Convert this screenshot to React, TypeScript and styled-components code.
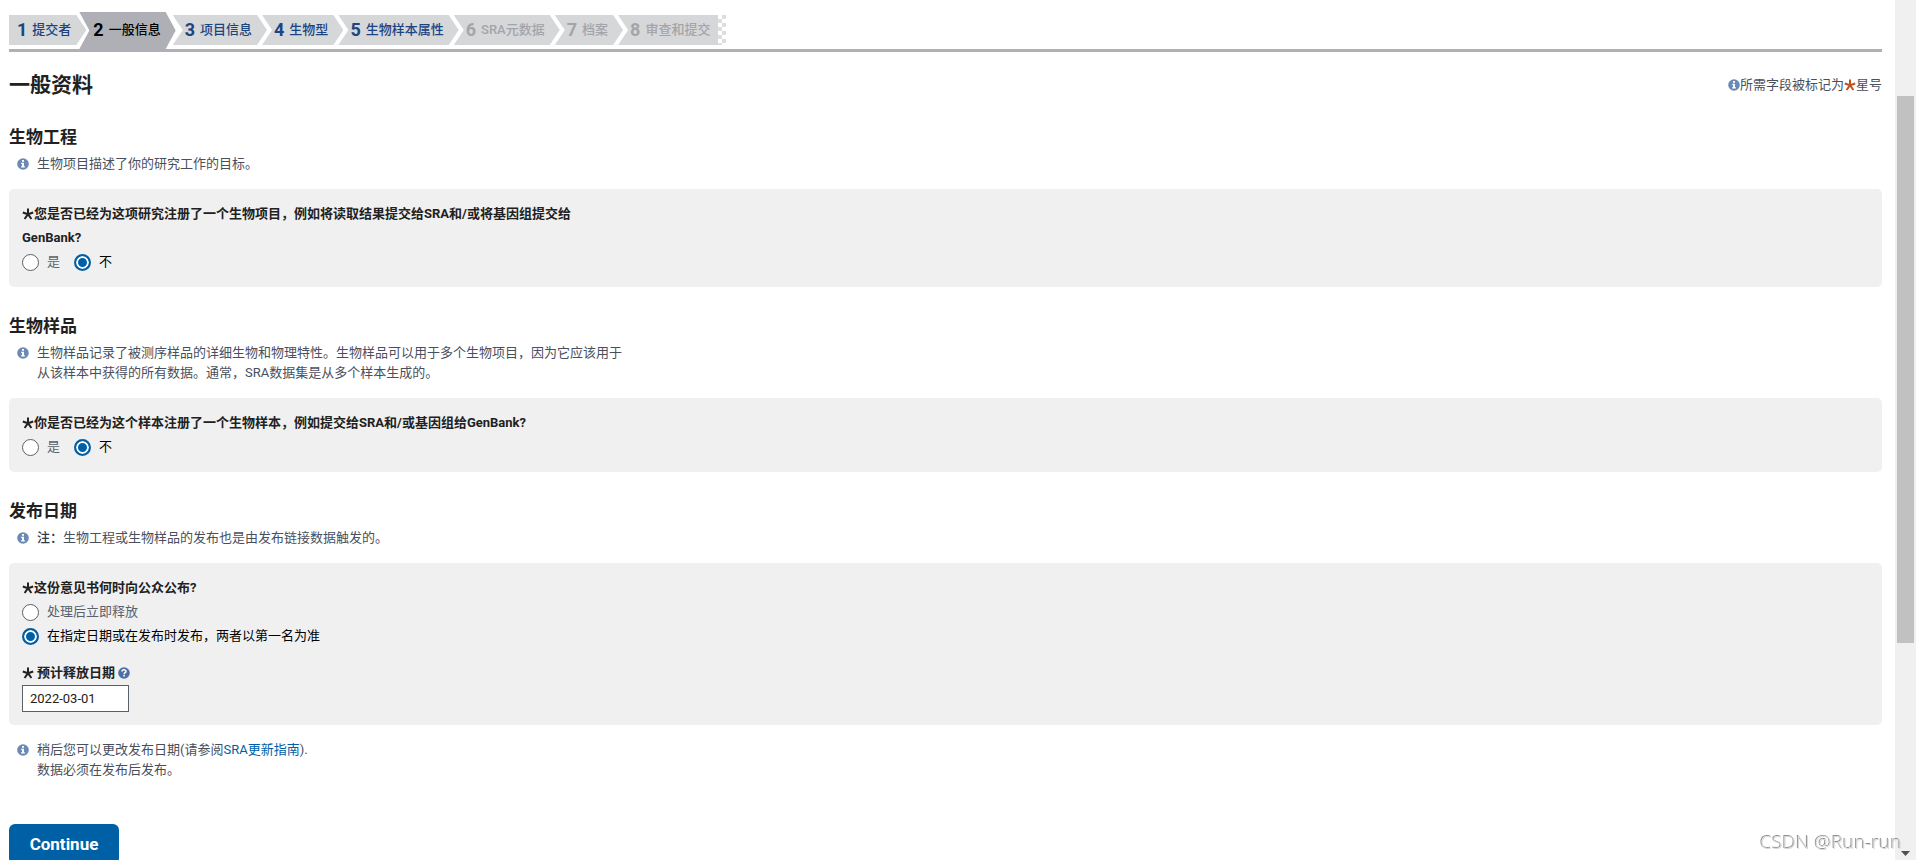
import React from "react";
import styled, { createGlobalStyle, css } from "styled-components";

const GlobalStyle = createGlobalStyle`
  *, *::before, *::after { box-sizing: border-box; }
  body {
    margin: 0;
    background: #fff;
    color: #212121;
    font: 13px/20px Roboto, "Noto Sans CJK SC", sans-serif;
  }
`;

const Shell = styled.div`
  display: flex;
  height: 100vh;
  overflow: hidden;
`;

const Main = styled.main`
  flex: 1;
  min-width: 0;
  padding: 12px 13px 0 9px;
`;

const Steps = styled.ol`
  display: flex;
  margin: 0;
  padding: 0;
  list-style: none;
  height: 40px;
  border-bottom: 3px solid #aeb0b5;
`;

type StepState = "open" | "active" | "disabled";

const StepItem = styled.li<{ $state: StepState }>`
  height: 30px;
  margin: 3px 0 0 -5px;

  &:first-child {
    margin-left: 0;
  }

  ${({ $state }) =>
    $state === "active" &&
    css`
      height: 37px;
      margin: 0 2px 0 -7px;
    `}
`;

const stepColors: Record<StepState, string> = {
  open: "#1c4481",
  active: "#000",
  disabled: "#a3a5aa",
};

const StepLink = styled.a<{ $state: StepState; $edge?: "first" | "last" }>`
  display: flex;
  align-items: center;
  gap: 5px;
  height: 100%;
  padding: 0 15px 0 12px;
  background: ${({ $state }) => ($state === "active" ? "#aeb0b5" : "#d6d7d9")};
  color: ${({ $state }) => stepColors[$state]};
  font-weight: 500;
  text-decoration: none;
  white-space: nowrap;
  clip-path: polygon(0 0, calc(100% - 10px) 0, 100% 50%, calc(100% - 10px) 100%, 0 100%, 10px 50%);

  ${({ $state }) =>
    $state === "active" &&
    css`
      padding-left: 14px;
      padding-bottom: 2px;
    `}
  ${({ $edge }) =>
    $edge === "first" &&
    css`
      padding-left: 8px;
      clip-path: polygon(0 0, calc(100% - 10px) 0, 100% 50%, calc(100% - 10px) 100%, 0 100%);
    `}
  ${({ $edge }) =>
    $edge === "last" &&
    css`
      padding-right: 8px;
      clip-path: polygon(0 0, 100% 0, 100% 100%, 0 100%, 10px 50%);
    `}
`;

const StepNumber = styled.span`
  font-size: 18px;
  font-weight: 700;
`;

const StepsTail = styled.li`
  width: 8px;
  height: 30px;
  margin-top: 3px;
  background: conic-gradient(#dddee0 25%, #fff 0 50%, #dddee0 0 75%, #fff 0) 0 0 / 8px 8px;
`;

const TitleRow = styled.header`
  display: flex;
  justify-content: space-between;
  align-items: center;
  margin-top: 18px;
`;

const Title = styled.h1`
  margin: 0;
  font-size: 21px;
  line-height: 30px;
  font-weight: 700;
`;

const RequiredHint = styled.p`
  display: flex;
  align-items: center;
  margin: 0;
  color: #494f5c;
`;

const Section = styled.section`
  margin-top: 27px;

  ${TitleRow} + & {
    margin-top: 25px;
  }
`;

const SectionTitle = styled.h2`
  margin: 0 0 5px;
  font-size: 17px;
  line-height: 24px;
  font-weight: 700;
`;

const Note = styled.div`
  display: flex;
  gap: 8px;
  max-width: 620px;
  padding-left: 8px;
  color: #494f5c;

  p {
    margin: 0;
  }

  strong {
    font-weight: 500;
    color: #323a45;
  }
`;

const IconBox = styled.span`
  display: flex;
  align-items: center;
  flex: none;
  height: 20px;
`;

const Panel = styled.div`
  margin: 15px 0;
  padding: 13px;
  border-radius: 5px;
  background: #f0f0f0;
  line-height: 24px;
`;

const Group = styled.fieldset`
  margin: 0;
  padding: 0;
  border: 0;
`;

const Question = styled.legend`
  max-width: 590px;
  padding: 0;
  font-weight: 700;
`;

const Options = styled.div<{ $stacked?: boolean }>`
  display: flex;
  flex-direction: ${({ $stacked }) => ($stacked ? "column" : "row")};
  align-items: flex-start;
  column-gap: 14px;
`;

const OptionLabel = styled.label`
  display: flex;
  align-items: center;
  gap: 8px;
  height: 24px;
  color: #5b616b;

  &:has(input:checked) {
    color: #000;
  }
`;

const Radio = styled.input.attrs({ type: "radio" })`
  appearance: none;
  width: 17px;
  height: 17px;
  margin: 0;
  border: 1px solid #5b616b;
  border-radius: 50%;
  background: #fff;

  &:checked {
    border: 2px solid #0060a5;
    background: #0060a5;
    box-shadow: inset 0 0 0 2px #fff;
  }
`;

const DateField = styled.div`
  margin-top: 13px;
`;

const DateLabel = styled.label`
  display: flex;
  align-items: center;
  gap: 3px;
  font-weight: 700;
`;

const DateInput = styled.input`
  display: block;
  width: 107px;
  height: 27px;
  padding: 0 7px;
  border: 1px solid #5b616b;
  border-radius: 0;
  background: #fff;
  color: #212121;
  font: inherit;
`;

const Link = styled.a`
  color: #0060a5;
  text-decoration: none;
`;

const Continue = styled.button`
  display: block;
  width: 110px;
  height: 40px;
  margin-top: 44px;
  border: 0;
  border-radius: 6px;
  background: #0060a5;
  color: #fff;
  font: 700 17px/20px Roboto, sans-serif;
`;

const ScrollTrack = styled.div`
  display: flex;
  flex-direction: column;
  align-items: center;
  justify-content: space-between;
  width: 21px;
  padding: 96px 2px 4px;
  background: #f0f0f0;
`;

const ScrollThumb = styled.div`
  width: 17px;
  height: 72%;
  background: #c1c1c1;
`;

const Watermark = styled.div`
  position: fixed;
  right: 14px;
  bottom: 4px;
  color: #d8d8d8;
  font: 300 19px/28px "Noto Sans", sans-serif;
  text-shadow: -1px -1px 0 #8f8f8f;
`;

const StarSvg = styled.svg<{ $accent?: boolean }>`
  display: inline-block;
  vertical-align: -2px;
  color: ${({ $accent }) => ($accent ? "#c05020" : "#212121")};
`;

const Star = ({ accent }: { accent?: boolean }) => (
  <StarSvg $accent={accent} width="12" height="12" viewBox="0 0 12 12" aria-hidden="true">
    <path
      d="M6 6.2V0.500M6 6.2L0.800 4.500M6 6.2L11.200 4.500M6 6.2L2.600 11M6 6.2L9.400 11"
      fill="none"
      stroke="currentColor"
      strokeWidth="2"
    />
  </StarSvg>
);

const InfoIcon = () => (
  <svg width="12" height="12" viewBox="0 0 12 12" aria-hidden="true">
    <circle cx="6" cy="6" r="5.8" fill="#6a8ab5" />
    <path d="M5 2h2v1.7H5zM4.2 4.7H7v3.5h.9v1.3H4.1V8.2H5V6h-.8z" fill="#fff" />
  </svg>
);

const HelpIcon = () => (
  <svg width="12" height="12" viewBox="0 0 12 12" aria-hidden="true">
    <circle cx="6" cy="6" r="5.8" fill="#4e6fa3" />
    <path d="M4 4.6C4 2.3 8 2.3 8 4.5C8 5.8 6.1 5.7 6.1 7.2" fill="none" stroke="#fff" strokeWidth="1.5" />
    <path d="M5.3 8h1.6v1.5H5.3z" fill="#fff" />
  </svg>
);

const steps: { label: string; state: StepState }[] = [
  { label: "提交者", state: "open" },
  { label: "一般信息", state: "active" },
  { label: "项目信息", state: "open" },
  { label: "生物型", state: "open" },
  { label: "生物样本属性", state: "open" },
  { label: "SRA元数据", state: "disabled" },
  { label: "档案", state: "disabled" },
  { label: "审查和提交", state: "disabled" },
];

interface InfoNoteProps {
  children: React.ReactNode;
}

const InfoNote = ({ children }: InfoNoteProps) => (
  <Note>
    <IconBox>
      <InfoIcon />
    </IconBox>
    <p>{children}</p>
  </Note>
);

interface ChoiceProps {
  name: string;
  question: string;
  options: string[];
  stacked?: boolean;
}

const Choice = ({ name, question, options, stacked }: ChoiceProps) => (
  <Group>
    <Question>
      <Star />
      {question}
    </Question>
    <Options $stacked={stacked}>
      {options.map((option, i) => (
        <OptionLabel key={option}>
          <Radio name={name} defaultChecked={i === 1} />
          {option}
        </OptionLabel>
      ))}
    </Options>
  </Group>
);

export default function App() {
  return (
    <>
      <GlobalStyle />
      <Shell>
        <Main>
          <nav>
            <Steps>
              {steps.map(({ label, state }, i) => (
                <StepItem key={label} $state={state}>
                  <StepLink
                    href="#"
                    $state={state}
                    $edge={i === 0 ? "first" : i === steps.length - 1 ? "last" : undefined}
                  >
                    <StepNumber>{i + 1}</StepNumber>
                    {label}
                  </StepLink>
                </StepItem>
              ))}
              <StepsTail aria-hidden="true" />
            </Steps>
          </nav>

          <TitleRow>
            <Title>一般资料</Title>
            <RequiredHint>
              <InfoIcon />
              所需字段被标记为
              <Star accent />
              星号
            </RequiredHint>
          </TitleRow>

          <Section>
            <SectionTitle>生物工程</SectionTitle>
            <InfoNote>生物项目描述了你的研究工作的目标。</InfoNote>
            <Panel>
              <Choice
                name="bioproject"
                question="您是否已经为这项研究注册了一个生物项目，例如将读取结果提交给SRA和/或将基因组提交给GenBank?"
                options={["是", "不"]}
              />
            </Panel>
          </Section>

          <Section>
            <SectionTitle>生物样品</SectionTitle>
            <InfoNote>
              生物样品记录了被测序样品的详细生物和物理特性。生物样品可以用于多个生物项目，因为它应该用于从该样本中获得的所有数据。通常，SRA数据集是从多个样本生成的。
            </InfoNote>
            <Panel>
              <Choice
                name="biosample"
                question="你是否已经为这个样本注册了一个生物样本，例如提交给SRA和/或基因组给GenBank?"
                options={["是", "不"]}
              />
            </Panel>
          </Section>

          <Section>
            <SectionTitle>发布日期</SectionTitle>
            <InfoNote>
              <strong>注：</strong>生物工程或生物样品的发布也是由发布链接数据触发的。
            </InfoNote>
            <Panel>
              <Choice
                name="release"
                question="这份意见书何时向公众公布?"
                options={["处理后立即释放", "在指定日期或在发布时发布，两者以第一名为准"]}
                stacked
              />
              <DateField>
                <DateLabel htmlFor="release-date">
                  <Star />
                  预计释放日期
                  <HelpIcon />
                </DateLabel>
                <DateInput id="release-date" type="text" defaultValue="2022-03-01" />
              </DateField>
            </Panel>
            <InfoNote>
              稍后您可以更改发布日期(请参阅<Link href="#">SRA更新指南</Link>).
              <br />
              数据必须在发布后发布。
            </InfoNote>
          </Section>

          <Continue type="button">Continue</Continue>
        </Main>
        <ScrollTrack aria-hidden="true">
          <ScrollThumb />
          <svg width="9" height="5" viewBox="0 0 9 5">
            <path d="M0 0H9L4.500 5Z" fill="#505050" />
          </svg>
        </ScrollTrack>
      </Shell>
      <Watermark>CSDN @Run-run</Watermark>
    </>
  );
}
